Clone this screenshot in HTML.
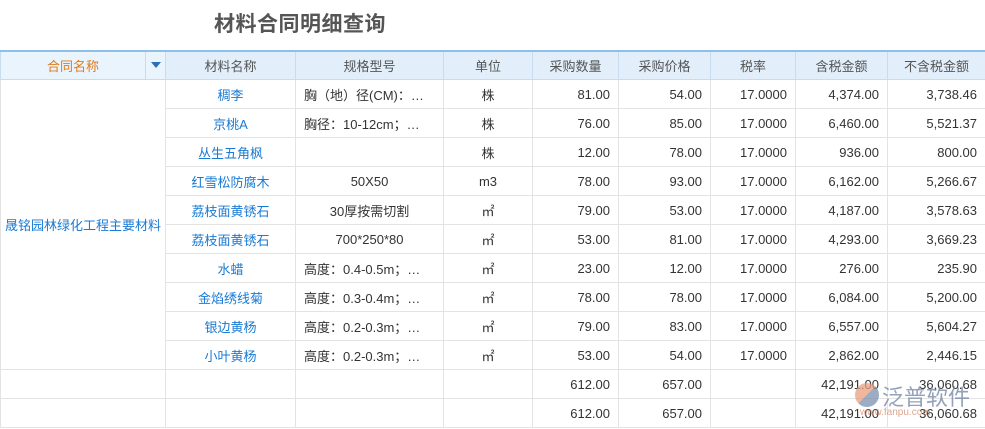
<!DOCTYPE html><html><head><meta charset="utf-8"><style>
body{margin:0;width:985px;height:429px;overflow:hidden;background:#fff;font-family:"Liberation Sans","Noto Sans CJK SC",sans-serif;font-size:13px;color:#333}
h1{position:absolute;left:214px;top:8px;margin:0;font-size:21px;font-weight:bold;color:#555;letter-spacing:0.5px}
table{position:absolute;left:0;top:50px;border-collapse:collapse;table-layout:fixed;width:985px}
td,th{height:28px;border:1px solid #e3e3e3;padding:0 8px;white-space:nowrap;overflow:hidden}
th{font-weight:normal;background:#e2eefa;color:#555;border-color:#c6dcef;border-top:2px solid #8dbfe8;height:27px}
th.f{background:#eaf4fd;color:#e07a1a;border-right:none}
th.dd{background:#eaf4fd;padding:0;border-left:1px solid #c6dcef}
.c{text-align:center}.r{text-align:right}.b{color:#1a7ad4;text-align:center}
.l{text-align:left}
</style></head><body>
<h1>材料合同明细查询</h1>
<table>
<colgroup><col style="width:145px"><col style="width:20px"><col style="width:130px"><col style="width:148px"><col style="width:89px"><col style="width:86px"><col style="width:92px"><col style="width:85px"><col style="width:92px"><col style="width:98px"></colgroup>
<tr><th class="f">合同名称</th><th class="dd"><span style="display:inline-block;border:5px solid transparent;border-top:6px solid #2a6fb8;margin-top:6px"></span></th><th>材料名称</th><th>规格型号</th><th>单位</th><th>采购数量</th><th>采购价格</th><th>税率</th><th>含税金额</th><th>不含税金额</th></tr>
<tr><td colspan="2" rowspan="10" style="color:#1a7ad4;padding:0 4px">晟铭园林绿化工程主要材料</td><td class="b">稠李</td><td class="l">胸（地）径(CM)：…</td><td class="c">株</td><td class="r">81.00</td><td class="r">54.00</td><td class="r">17.0000</td><td class="r">4,374.00</td><td class="r">3,738.46</td></tr>
<tr><td class="b">京桃A</td><td class="l">胸径：10-12cm；…</td><td class="c">株</td><td class="r">76.00</td><td class="r">85.00</td><td class="r">17.0000</td><td class="r">6,460.00</td><td class="r">5,521.37</td></tr>
<tr><td class="b">丛生五角枫</td><td></td><td class="c">株</td><td class="r">12.00</td><td class="r">78.00</td><td class="r">17.0000</td><td class="r">936.00</td><td class="r">800.00</td></tr>
<tr><td class="b">红雪松防腐木</td><td class="c">50X50</td><td class="c">m3</td><td class="r">78.00</td><td class="r">93.00</td><td class="r">17.0000</td><td class="r">6,162.00</td><td class="r">5,266.67</td></tr>
<tr><td class="b">荔枝面黄锈石</td><td class="c">30厚按需切割</td><td class="c">㎡</td><td class="r">79.00</td><td class="r">53.00</td><td class="r">17.0000</td><td class="r">4,187.00</td><td class="r">3,578.63</td></tr>
<tr><td class="b">荔枝面黄锈石</td><td class="c">700*250*80</td><td class="c">㎡</td><td class="r">53.00</td><td class="r">81.00</td><td class="r">17.0000</td><td class="r">4,293.00</td><td class="r">3,669.23</td></tr>
<tr><td class="b">水蜡</td><td class="l">高度：0.4-0.5m；…</td><td class="c">㎡</td><td class="r">23.00</td><td class="r">12.00</td><td class="r">17.0000</td><td class="r">276.00</td><td class="r">235.90</td></tr>
<tr><td class="b">金焰绣线菊</td><td class="l">高度：0.3-0.4m；…</td><td class="c">㎡</td><td class="r">78.00</td><td class="r">78.00</td><td class="r">17.0000</td><td class="r">6,084.00</td><td class="r">5,200.00</td></tr>
<tr><td class="b">银边黄杨</td><td class="l">高度：0.2-0.3m；…</td><td class="c">㎡</td><td class="r">79.00</td><td class="r">83.00</td><td class="r">17.0000</td><td class="r">6,557.00</td><td class="r">5,604.27</td></tr>
<tr><td class="b">小叶黄杨</td><td class="l">高度：0.2-0.3m；…</td><td class="c">㎡</td><td class="r">53.00</td><td class="r">54.00</td><td class="r">17.0000</td><td class="r">2,862.00</td><td class="r">2,446.15</td></tr>
<tr><td colspan="2"></td><td></td><td></td><td></td><td class="r">612.00</td><td class="r">657.00</td><td></td><td class="r">42,191.00</td><td class="r">36,060.68</td></tr>
<tr><td colspan="2"></td><td></td><td></td><td></td><td class="r">612.00</td><td class="r">657.00</td><td></td><td class="r">42,191.00</td><td class="r">36,060.68</td></tr>
</table>
<div style="position:absolute;left:855px;top:383px;width:24px;height:24px;border-radius:50%;background:linear-gradient(135deg,#e8a080 50%,#7a90b0 50%);opacity:.75"></div>
<div style="position:absolute;left:882px;top:380px;font-size:22px;color:#7a8aa8;opacity:.8">泛普软件</div>
<div style="position:absolute;left:860px;top:407px;font-size:10px;color:#d08060;opacity:.7">www.fanpu.com</div>
</body></html>
